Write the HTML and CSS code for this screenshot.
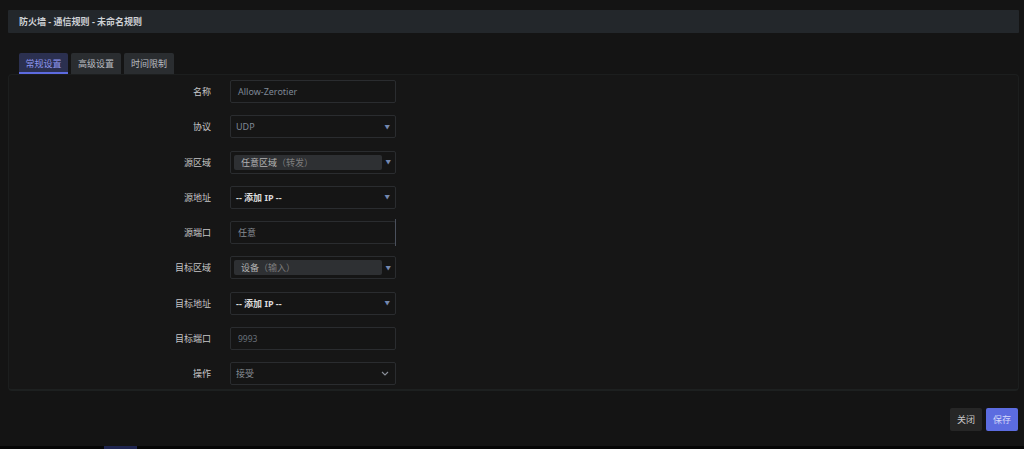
FILE: index.html
```html
<!DOCTYPE html>
<html lang="zh">
<head>
<meta charset="utf-8">
<link rel="stylesheet" href="styles.css">
</head>
<body>
<div class="page">
  <div class="header">防火墙 - 通信规则 - 未命名规则</div>
  <div class="tabs">
    <div class="tab active">常规设置</div>
    <div class="tab">高级设置</div>
    <div class="tab">时间限制</div>
  </div>
  <div class="panel">
    <div class="form">
      <div class="label">名称</div>
      <div class="field"><span class="val">Allow-Zerotier</span></div>

      <div class="label">协议</div>
      <div class="field select"><span class="val">UDP</span><span class="tri">▼</span></div>

      <div class="label">源区域</div>
      <div class="field select chipfield"><span class="chip">任意区域<span class="dim">（转发）</span></span><span class="tri">▼</span></div>

      <div class="label">源地址</div>
      <div class="field select"><span class="bold">-- 添加 IP --</span><span class="tri">▼</span></div>

      <div class="label">源端口</div>
      <div class="field dyn"><span class="val light">任意</span></div>

      <div class="label">目标区域</div>
      <div class="field select chipfield"><span class="chip">设备<span class="dim">（输入）</span></span><span class="tri">▼</span></div>

      <div class="label">目标地址</div>
      <div class="field select"><span class="bold">-- 添加 IP --</span><span class="tri">▼</span></div>

      <div class="label">目标端口</div>
      <div class="field"><span class="val ph">9993</span></div>

      <div class="label">操作</div>
      <div class="field select"><span class="val light">接受</span>
        <svg class="chev" width="8" height="5" viewBox="0 0 8 5"><path d="M1 1 L4 4 L7 1" fill="none" stroke="#8a8f99" stroke-width="1.1"/></svg>
      </div>
    </div>
  </div>
  <div class="footer">
    <button class="btn close">关闭</button>
    <button class="btn save">保存</button>
  </div>
</div>
<div class="bottom"><span class="bottom-mark"></span></div>
</body>
</html>
```
FILE: styles.css
```css
* { box-sizing: border-box; }
html, body { margin: 0; padding: 0; }
body {
  background: #141414;
  font-family: "Noto Sans", "Noto Sans CJK SC", sans-serif;
  font-size: 9px;
  color: #c4c4c4;
  width: 1024px;
  height: 449px;
  overflow: hidden;
  display: flex;
  flex-direction: column;
}
.page {
  padding: 10px 5px 0 8px;
  flex: 1;
  display: flex;
  flex-direction: column;
}
.header {
  height: 23px;
  background: #23272b;
  border-radius: 1px;
  padding-left: 11px;
  display: flex;
  align-items: center;
  font-weight: 700;
  color: #cfd2d6;
  font-size: 9px;
}
.tabs {
  display: flex;
  gap: 3px;
  margin-top: 20px;
  padding-left: 11px;
  height: 21px;
}
.tab {
  background: #2a2d30;
  color: #b9bcc0;
  width: 50px;
  justify-content: center;
  display: flex;
  align-items: center;
  border-radius: 2px 2px 0 0;
  height: 21px;
}
.tab.active {
  width: 49px;
  background: #2b3050;
  color: #8d96ee;
  border-bottom: 2px solid #5d6be0;
  padding-top: 2px;
}
.panel {
  background: #161616;
  border: 1px solid #1c1e1e;
  border-bottom: 2px solid #1d2020;
  border-radius: 4px;
  height: 317px;
  padding-top: 5px;
}
.form {
  display: grid;
  grid-template-columns: 202px 166px;
  column-gap: 19px;
  grid-auto-rows: 23px;
  row-gap: 12.3px;
}
.label {
  text-align: right;
  display: flex;
  align-items: center;
  justify-content: flex-end;
  color: #c6c6c8;
}
.field {
  border: 1px solid #2a2c2f;
  border-radius: 2px;
  background: #151515;
  display: flex;
  align-items: center;
  padding: 0 7px;
  position: relative;
}
.val { color: #7f8895; }
.val.light { color: #868c93; }
.val.ph { color: #6a717b; font-size: 8.5px; }
.select { justify-content: space-between; padding-right: 5px; padding-left: 5px; }
.tri { color: #7488b0; font-size: 5.5px; }
.bold { color: #dadada; font-weight: 700; }
.chipfield { padding-left: 3px; padding-right: 4px; }
.chip {
  background: #2e3033;
  border-radius: 2px;
  height: 15px;
  width: 148px;
  flex: none;
  display: flex;
  align-items: center;
  padding-left: 7px;
  color: #b3b3b3;
}
.chip .dim { color: #7d7d7d; }
.dyn::after {
  content: "";
  position: absolute;
  right: -1px;
  top: -3px;
  bottom: -3px;
  width: 1.5px;
  background: #4a505c;
}
.chev { margin-right: 1px; }
.footer {
  display: flex;
  justify-content: flex-end;
  gap: 4px;
  margin-top: 17px;
  padding-right: 1px;
}
.btn {
  font-family: inherit;
  font-size: 9px;
  border: none;
  border-radius: 2px;
  height: 23px;
  width: 32px;
  padding: 0;
}
.btn.close { background: #262626; color: #c8c8c8; }
.btn.save { background: #5c6ce0; color: #d4d8fa; }
.bottom {
  height: 3px;
  background: #060606;
  padding-left: 104px;
}
.bottom-mark {
  display: block;
  width: 33px;
  height: 3px;
  background: #1f2550;
}
```
